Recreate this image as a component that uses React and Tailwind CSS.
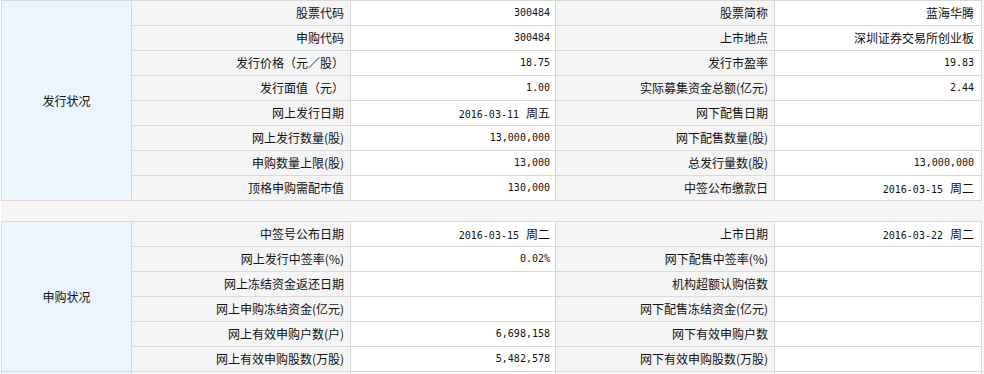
import React from 'react';

const issue = [
  ['股票代码', '300484', '股票简称', '蓝海华腾'],
  ['申购代码', '300484', '上市地点', '深圳证券交易所创业板'],
  ['发行价格（元／股）', '18.75', '发行市盈率', '19.83'],
  ['发行面值（元）', '1.00', '实际募集资金总额(亿元)', '2.44'],
  ['网上发行日期', '2016-03-11 周五', '网下配售日期', ''],
  ['网上发行数量(股)', '13,000,000', '网下配售数量(股)', ''],
  ['申购数量上限(股)', '13,000', '总发行量数(股)', '13,000,000'],
  ['顶格申购需配市值', '130,000', '中签公布缴款日', '2016-03-15 周二'],
];

const subscribe = [
  ['中签号公布日期', '2016-03-15 周二', '上市日期', '2016-03-22 周二'],
  ['网上发行中签率(%)', '0.02%', '网下配售中签率(%)', ''],
  ['网上冻结资金返还日期', '', '机构超额认购倍数', ''],
  ['网上申购冻结资金(亿元)', '', '网下配售冻结资金(亿元)', ''],
  ['网上有效申购户数(户)', '6,698,158', '网下有效申购户数', ''],
  ['网上有效申购股数(万股)', '5,482,578', '网下有效申购股数(万股)', ''],
];

// digits are rendered mono, chinese suffix (周五 etc) in the cjk font
const Value = ({ text }) => {
  if (!text) return null;
  if (!/\d/.test(text)) return <span>{text}</span>;
  const [num, cn] = text.split(' ');
  return (
    <span className="flex items-baseline">
      <span className="font-['DejaVu_Sans_Mono',monospace] text-[10px]">{num}</span>
      {cn && <span className="ml-[7px] text-[12px]">{cn}</span>}
    </span>
  );
};

const Section = ({ title, rows, extra }) => (
  <div className="grid w-[981px] grid-cols-[129px_218px_204px_218px_206px] auto-rows-[24px] gap-px border border-[#d9d9d9] bg-[#d9d9d9]">
    <div
      className="flex items-center justify-center bg-[#ebf5fe]"
      style={{ gridRow: `span ${rows.length} / span ${rows.length}` }}
    >
      {title}
    </div>
    {rows.map((r, i) => (
      <React.Fragment key={i}>
        <div className="col-start-2 flex items-center justify-end bg-[#f5f5f5] pr-[6px]">{r[0]}</div>
        <div className="flex items-center justify-end bg-white pr-[5px]">
          <Value text={r[1]} />
        </div>
        <div className="flex items-center justify-end bg-[#f5f5f5] pr-[6px]">{r[2]}</div>
        <div className="flex items-center justify-end bg-white pr-[7px]">
          <Value text={r[3]} />
        </div>
      </React.Fragment>
    ))}
    {extra && (
      <>
        <div className="bg-[#ebf5fe]" />
        <div className="bg-[#f5f5f5]" />
        <div className="bg-white" />
        <div className="bg-[#f5f5f5]" />
        <div className="bg-white" />
      </>
    )}
  </div>
);

export default function App() {
  return (
    <div className="min-h-[374px] bg-white font-['Noto_Sans_CJK_SC',sans-serif] text-[12px] leading-none text-[#111]">
      <div className="ml-px flex min-h-[374px] flex-col gap-[20px] bg-[#f5f5f5]">
        <Section title="发行状况" rows={issue} />
        <Section title="申购状况" rows={subscribe} extra />
      </div>
    </div>
  );
}
